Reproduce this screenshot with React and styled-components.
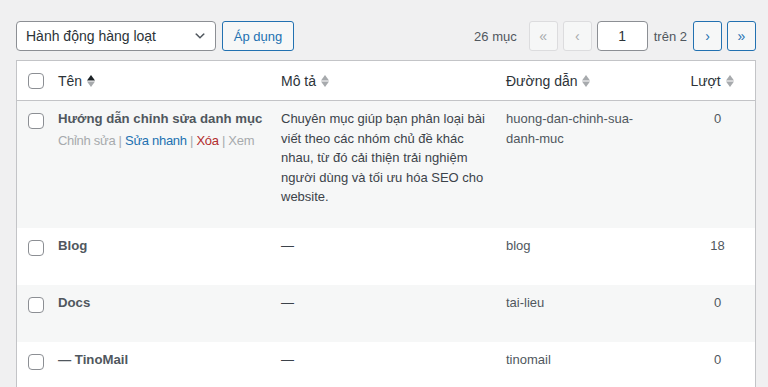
import React from 'react';
import styled, { createGlobalStyle } from 'styled-components';

const GlobalStyle = createGlobalStyle`
    body {
        margin: 0;
        background: #f0f0f1;
        font-family: "Liberation Sans", Arial, sans-serif;
        font-size: 13px;
        color: #3c434a;
    }
`;

const Page = styled.div`
    padding: 21px 12px 0 16px;
`;

const TableNav = styled.div`
    display: flex;
    align-items: center;
    justify-content: space-between;
    height: 30px;
    margin-bottom: 9px;
`;

const BulkActions = styled.div`
    display: flex;
    align-items: center;
    gap: 6px;
`;

const SelectBox = styled.div`
    box-sizing: border-box;
    width: 200px;
    height: 30px;
    display: flex;
    align-items: center;
    justify-content: space-between;
    padding: 0 8px 0 9px;
    background: #fff;
    border: 1px solid #8c8f94;
    border-radius: 4px;
    font-size: 14px;
    color: #2c3338;
`;

const Button = styled.button`
    box-sizing: border-box;
    width: 72px;
    height: 30px;
    padding: 0;
    font-family: inherit;
    font-size: 13px;
    color: #2271b1;
    background: #f6f7f7;
    border: 1px solid #2271b1;
    border-radius: 3px;
`;

const Pages = styled.div`
    display: flex;
    align-items: center;
    gap: 5px;
`;

const PageText = styled.span`
    font-size: 13px;
    color: #50575e;
    margin: ${p => p.$margin || '0'};
`;

const PageButton = styled.span`
    box-sizing: border-box;
    width: 29px;
    height: 30px;
    display: flex;
    align-items: center;
    justify-content: center;
    font-size: 14px;
    background: #f6f7f7;
    border-radius: 3px;
    border: 1px solid ${p => (p.$disabled ? '#dcdcde' : '#2271b1')};
    color: ${p => (p.$disabled ? '#a7aaad' : '#2271b1')};
`;

const PageInput = styled.span`
    box-sizing: border-box;
    width: 51px;
    height: 30px;
    display: flex;
    align-items: center;
    justify-content: center;
    background: #fff;
    border: 1px solid #8c8f94;
    border-radius: 4px;
    font-size: 14px;
    color: #2c3338;
`;

const Table = styled.table`
    width: 740px;
    table-layout: fixed;
    border-collapse: separate;
    border-spacing: 0;
    background: #fff;
    border: 1px solid #c3c4c7;
    border-bottom: none;
`;

const Th = styled.th`
    height: 39px;
    padding: ${p => p.$pad || '0 10px'};
    text-align: ${p => p.$align || 'left'};
    font-weight: 400;
    font-size: 14px;
    color: #2c3338;
    border-bottom: 1px solid #c3c4c7;
    vertical-align: middle;
`;

const CheckTh = styled.th`
    padding: 0 0 0 11px;
    border-bottom: 1px solid #c3c4c7;
    vertical-align: middle;
    text-align: left;
`;

const SortLabel = styled.span`
    display: inline-flex;
    align-items: center;
    gap: 4px;
`;

const Row = styled.tr`
    background: ${p => (p.$alt ? '#f6f7f7' : '#fff')};
`;

const Td = styled.td`
    padding: 8px 10px;
    vertical-align: top;
    text-align: ${p => p.$align || 'left'};
    font-size: 13px;
    line-height: 19.5px;
    color: ${p => p.$color || '#50575e'};
`;

const CheckTd = styled.td`
    padding: 12px 0 0 11px;
    vertical-align: top;
`;

const Checkbox = styled.span`
    display: block;
    box-sizing: border-box;
    width: 16px;
    height: 16px;
    background: #fff;
    border: 1px solid #8c8f94;
    border-radius: 4px;
`;

const RowTitle = styled.div`
    font-size: 13.2px;
    font-weight: 700;
    line-height: 19.5px;
    color: #50575e;
    white-space: nowrap;
`;

const RowActions = styled.div`
    padding-top: 2px;
    font-size: 13px;
    line-height: 19.5px;
    letter-spacing: -0.3px;
    color: #a7aaad;
    white-space: nowrap;
    visibility: ${p => (p.$hidden ? 'hidden' : 'visible')};
`;

const Action = styled.span`
    color: ${p => p.$color || '#a7aaad'};
`;

const Desc = styled.p`
    margin: 0 0 13px;
    color: #3c434a;
`;

const SortIcon = ({ active }) => (
    <svg width="10" height="16" viewBox="0 0 10 16">
        <polygon points="1,7.5 5,2 9,7.5" fill={active ? '#1d2327' : '#a7aaad'} />
        <polygon points="1,8.5 5,14 9,8.5" fill="#a7aaad" />
    </svg>
);

const Chevron = () => (
    <svg width="14" height="14" viewBox="0 0 20 20">
        <path d="M5 6l5 5 5-5 2 1-7 7-7-7 2-1z" fill="#50575e" />
    </svg>
);

const rows = [
    {
        name: 'Hướng dẫn chỉnh sửa danh mục',
        desc: ['Chuyên mục giúp bạn phân loại bài', 'viết theo các nhóm chủ đề khác', 'nhau, từ đó cải thiện trải nghiệm', 'người dùng và tối ưu hóa SEO cho', 'website.'],
        slug: ['huong-dan-chinh-sua-', 'danh-muc'],
        count: 0,
        hover: true,
    },
    { name: 'Blog', slug: ['blog'], count: 18 },
    { name: 'Docs', slug: ['tai-lieu'], count: 0 },
    { name: '— TinoMail', slug: ['tinomail'], count: 0 },
];

const withBreaks = lines =>
    lines.map((l, i) => (
        <React.Fragment key={i}>
            {i > 0 && <br />}
            {l}
        </React.Fragment>
    ));

const App = () => {
    return (
        <Page>
            <GlobalStyle />
            <TableNav>
                <BulkActions>
                    <SelectBox>
                        <span>Hành động hàng loạt</span>
                        <Chevron />
                    </SelectBox>
                    <Button>Áp dụng</Button>
                </BulkActions>
                <Pages>
                    <PageText $margin="0 7px 0 0">26 mục</PageText>
                    <PageButton $disabled>«</PageButton>
                    <PageButton $disabled>‹</PageButton>
                    <PageInput>1</PageInput>
                    <PageText $margin="0 1px">trên 2</PageText>
                    <PageButton>›</PageButton>
                    <PageButton>»</PageButton>
                </Pages>
            </TableNav>
            <Table>
                <colgroup>
                    <col style={{ width: 31 }} />
                    <col style={{ width: 223 }} />
                    <col style={{ width: 225 }} />
                    <col style={{ width: 184 }} />
                    <col style={{ width: 75 }} />
                </colgroup>
                <thead>
                    <tr>
                        <CheckTh><Checkbox /></CheckTh>
                        <Th><SortLabel>Tên <SortIcon active /></SortLabel></Th>
                        <Th><SortLabel>Mô tả <SortIcon /></SortLabel></Th>
                        <Th><SortLabel>Đường dẫn <SortIcon /></SortLabel></Th>
                        <Th $align="center" $pad="0 16px 0 6px"><SortLabel>Lượt <SortIcon /></SortLabel></Th>
                    </tr>
                </thead>
                <tbody>
                    {rows.map((r, i) => (
                        <Row key={r.name} $alt={i % 2 === 0}>
                            <CheckTd><Checkbox /></CheckTd>
                            <Td>
                                <RowTitle>{r.name}</RowTitle>
                                <RowActions $hidden={!r.hover}>
                                    <Action>Chỉnh sửa</Action> | <Action $color="#2271b1">Sửa nhanh</Action> | <Action $color="#b32d2e">Xóa</Action> | <Action>Xem</Action>
                                </RowActions>
                            </Td>
                            <Td>
                                <Desc>{r.desc ? withBreaks(r.desc) : '—'}</Desc>
                            </Td>
                            <Td>{withBreaks(r.slug)}</Td>
                            <Td $align="center">{r.count}</Td>
                        </Row>
                    ))}
                </tbody>
            </Table>
        </Page>
    );
};

export default App;
